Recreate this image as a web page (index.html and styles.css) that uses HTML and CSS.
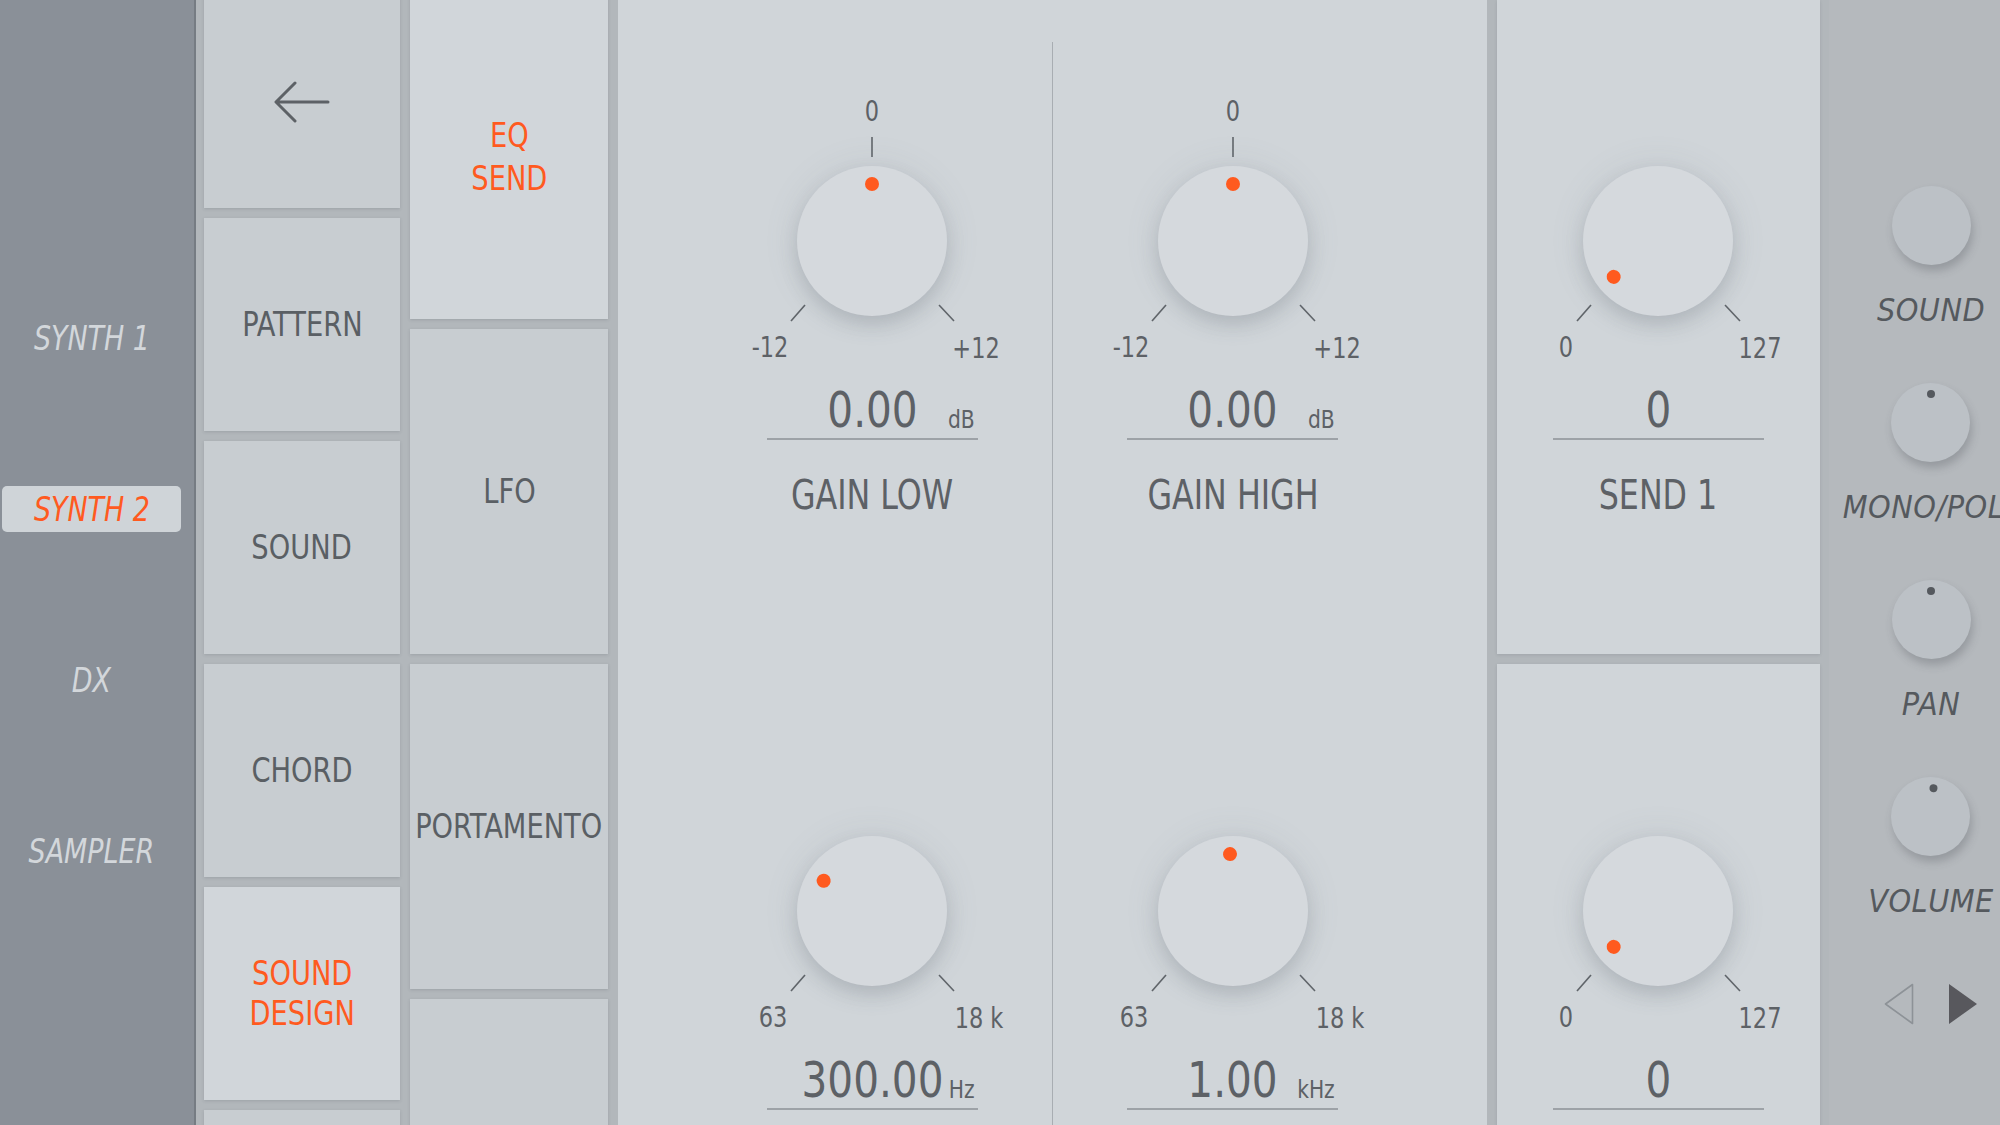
FILE: index.html
```html
<!DOCTYPE html>
<html lang="en">
<head>
<meta charset="utf-8">
<title>Sound Design - EQ / Send</title>
<link rel="stylesheet" href="styles.css">
</head>
<body>
<div class="app">
  <nav class="tracks">
    <div class="track"><span class="lbl">SYNTH 1</span></div>
    <div class="track active"><span class="lbl">SYNTH 2</span></div>
    <div class="track"><span class="lbl">DX</span></div>
    <div class="track"><span class="lbl">SAMPLER</span></div>
  </nav>

  <div class="menu menu-main">
    <div class="btn back">
      <svg width="58" height="42" viewBox="0 0 58 42" aria-label="Back">
        <path d="M55 21 H4 M22 2 L3 21 L22 40" fill="none" stroke="#5d6166" stroke-width="3" stroke-linecap="round" stroke-linejoin="round"/>
      </svg>
    </div>
    <div class="btn"><span class="lbl">PATTERN</span></div>
    <div class="btn"><span class="lbl">SOUND</span></div>
    <div class="btn"><span class="lbl">CHORD</span></div>
    <div class="btn active"><span class="lbl">SOUND<br>DESIGN</span></div>
    <div class="btn"></div>
  </div>

  <div class="menu menu-sub">
    <div class="btn active"><span class="lbl">EQ<br>SEND</span></div>
    <div class="btn"><span class="lbl">LFO</span></div>
    <div class="btn"><span class="lbl">PORTAMENTO</span></div>
    <div class="btn"></div>
  </div>

  <main class="eq">
    <div class="eq-col">
      <div class="unit">
        <div class="dial">
          <svg class="ticks" width="300" height="295" viewBox="0 0 300 295">
            <line x1="150" y1="46" x2="150" y2="66"/>
            <line x1="83" y1="214" x2="69" y2="230"/>
            <line x1="217" y1="214" x2="232" y2="230"/>
          </svg>
          <span class="mark mark-top">0</span>
          <span class="mark mark-min">-12</span>
          <span class="mark mark-max">+12</span>
          <div class="knob"><div class="pointer" style="transform: rotate(0deg)"><i class="dot"></i></div></div>
        </div>
        <div class="readout"><span class="num">0.00</span><span class="u">dB</span></div>
        <div class="param">GAIN LOW</div>
      </div>
      <div class="unit">
        <div class="dial">
          <svg class="ticks" width="300" height="295" viewBox="0 0 300 295">
            <line x1="83" y1="214" x2="69" y2="230"/>
            <line x1="217" y1="214" x2="232" y2="230"/>
          </svg>
          <span class="mark mark-min freq">63</span>
          <span class="mark mark-max freq">18 k</span>
          <div class="knob"><div class="pointer" style="transform: rotate(-58deg)"><i class="dot"></i></div></div>
        </div>
        <div class="readout"><span class="num">300.00</span><span class="u">Hz</span></div>
      </div>
    </div>

    <div class="eq-col">
      <div class="unit">
        <div class="dial">
          <svg class="ticks" width="300" height="295" viewBox="0 0 300 295">
            <line x1="150" y1="46" x2="150" y2="66"/>
            <line x1="83" y1="214" x2="69" y2="230"/>
            <line x1="217" y1="214" x2="232" y2="230"/>
          </svg>
          <span class="mark mark-top">0</span>
          <span class="mark mark-min">-12</span>
          <span class="mark mark-max">+12</span>
          <div class="knob"><div class="pointer" style="transform: rotate(0deg)"><i class="dot"></i></div></div>
        </div>
        <div class="readout"><span class="num">0.00</span><span class="u">dB</span></div>
        <div class="param">GAIN HIGH</div>
      </div>
      <div class="unit">
        <div class="dial">
          <svg class="ticks" width="300" height="295" viewBox="0 0 300 295">
            <line x1="83" y1="214" x2="69" y2="230"/>
            <line x1="217" y1="214" x2="232" y2="230"/>
          </svg>
          <span class="mark mark-min freq">63</span>
          <span class="mark mark-max freq">18 k</span>
          <div class="knob"><div class="pointer" style="transform: rotate(-3deg)"><i class="dot"></i></div></div>
        </div>
        <div class="readout"><span class="num">1.00</span><span class="u">kHz</span></div>
      </div>
    </div>
  </main>

  <div class="sends">
    <section class="send-panel">
      <div class="unit">
        <div class="dial">
          <svg class="ticks" width="300" height="295" viewBox="0 0 300 295">
            <line x1="83" y1="214" x2="69" y2="230"/>
            <line x1="217" y1="214" x2="232" y2="230"/>
          </svg>
          <span class="mark mark-min send">0</span>
          <span class="mark mark-max send">127</span>
          <div class="knob"><div class="pointer" style="transform: rotate(-129deg)"><i class="dot"></i></div></div>
        </div>
        <div class="readout"><span class="num">0</span></div>
        <div class="param">SEND 1</div>
      </div>
    </section>
    <section class="send-panel lower">
      <div class="unit">
        <div class="dial">
          <svg class="ticks" width="300" height="295" viewBox="0 0 300 295">
            <line x1="83" y1="214" x2="69" y2="230"/>
            <line x1="217" y1="214" x2="232" y2="230"/>
          </svg>
          <span class="mark mark-min send">0</span>
          <span class="mark mark-max send">127</span>
          <div class="knob"><div class="pointer" style="transform: rotate(-129deg)"><i class="dot"></i></div></div>
        </div>
        <div class="readout"><span class="num">0</span></div>
      </div>
    </section>
  </div>

  <aside class="mixer">
    <div class="m-item">
      <div class="m-knob"></div>
      <div class="m-label">SOUND</div>
    </div>
    <div class="m-item">
      <div class="m-knob"><div class="pointer" style="transform: rotate(0deg)"><i class="m-dot"></i></div></div>
      <div class="m-label">MONO/POLY</div>
    </div>
    <div class="m-item">
      <div class="m-knob"><div class="pointer" style="transform: rotate(0deg)"><i class="m-dot"></i></div></div>
      <div class="m-label">PAN</div>
    </div>
    <div class="m-item">
      <div class="m-knob"><div class="pointer" style="transform: rotate(5deg)"><i class="m-dot"></i></div></div>
      <div class="m-label">VOLUME</div>
    </div>
    <div class="arrows">
      <svg width="30" height="42" viewBox="0 0 30 42" aria-label="Previous">
        <path d="M28.5 1.5 L1.5 21 L28.5 40.5 Z" fill="none" stroke="#8d9297" stroke-width="1.6" stroke-linejoin="round"/>
      </svg>
      <svg width="30" height="42" viewBox="0 0 30 42" aria-label="Next">
        <path d="M1 1 L29 21 L1 41 Z" fill="#58585d"/>
      </svg>
    </div>
  </aside>
</div>
</body>
</html>
```

FILE: styles.css
```css
* { box-sizing: border-box; }

html, body {
  margin: 0;
  padding: 0;
}

body {
  width: 2000px;
  height: 1125px;
  overflow: hidden;
  background: #b2b7bb;
  font-family: "Liberation Sans Narrow", "DejaVu Sans Condensed", "Roboto Condensed", Roboto, sans-serif;
  color: #5b6065;
}

.app {
  display: flex;
  align-items: flex-start;
  width: 2000px;
  height: 1125px;
  overflow: hidden;
}

.lbl {
  display: inline-block;
  transform: scaleX(0.92);
}

/* ---------- track list ---------- */
.tracks {
  flex: 0 0 196px;
  height: 1125px;
  background: #8a9098;
  border-right: 2px solid #767c83;
  padding-top: 315px;
  display: flex;
  flex-direction: column;
  gap: 125px;
}

.track {
  margin-left: 2px;
  width: 179px;
  height: 46px;
  line-height: 46px;
  border-radius: 5px;
  text-align: center;
  font-style: italic;
  font-size: 34px;
  color: #d3d7db;
  white-space: nowrap;
}

.track .lbl {
  transform: scaleX(0.88);
}

.track.active {
  background: #cfd4d8;
  color: #ff5a1f;
}

/* ---------- menus ---------- */
.menu {
  flex-shrink: 0;
  display: flex;
  flex-direction: column;
  gap: 10px;
}

.menu-main {
  width: 196px;
  margin-left: 8px;
  margin-top: -5px;
}

.menu-sub {
  width: 198px;
  margin-left: 10px;
  margin-top: -6px;
}

.btn {
  flex-shrink: 0;
  display: flex;
  align-items: center;
  justify-content: center;
  text-align: center;
  background: #c8cdd1;
  font-size: 33px;
  color: #5a5f64;
  white-space: nowrap;
  box-shadow: 0 1px 3px rgba(60, 70, 80, 0.18);
}

.menu-main .btn {
  height: 213px;
  line-height: 40px;
}

.menu-sub .btn {
  height: 325px;
  line-height: 43px;
}

.btn.active {
  background: #d1d6da;
  color: #ff5a1f;
}

/* ---------- EQ panel ---------- */
.eq {
  flex: 0 0 869px;
  margin-left: 10px;
  height: 1125px;
  background: #d0d5d9;
  padding: 42px 0 0 74px;
  display: flex;
  overflow: hidden;
}

.eq-col {
  flex: 0 0 360px;
  padding-top: 49px;
  display: flex;
  flex-direction: column;
  align-items: center;
  gap: 245px;
}

.eq-col + .eq-col {
  border-left: 1px solid #a8adb2;
}

.unit {
  width: 300px;
  flex-shrink: 0;
}

.dial {
  position: relative;
  width: 300px;
  height: 295px;
}

.ticks {
  position: absolute;
  left: 0;
  top: 0;
}

.ticks line {
  stroke: #60656a;
  stroke-width: 1.6;
}

.mark {
  position: absolute;
  top: 256px;
  transform: translate(-50%, -50%) scaleX(0.86);
  font-size: 29px;
  line-height: 1;
  white-space: nowrap;
  color: #5d6166;
}

.mark-top { top: 19.5px; left: 150px; }
.mark-min { left: 48px; }
.mark-max { left: 254px; top: 257px; }
.mark-min.freq { left: 51px; }
.mark-max.freq { left: 257px; }
.mark-min.send { left: 58px; }
.mark-max.send { left: 252px; }

.knob {
  position: absolute;
  left: 75px;
  top: 75px;
  width: 150px;
  height: 150px;
  border-radius: 50%;
  background: #d5d9dd;
  box-shadow: 0 9px 18px rgba(90, 100, 110, 0.22), 0 0 34px rgba(120, 130, 140, 0.14);
}

.pointer {
  position: absolute;
  left: 0;
  top: 0;
  width: 100%;
  height: 100%;
}

.dot {
  position: absolute;
  left: 68px;
  top: 11px;
  width: 14px;
  height: 14px;
  border-radius: 50%;
  background: #ff5a1f;
}

.readout {
  position: relative;
  width: 211px;
  height: 54px;
  margin: 0 auto;
  padding-bottom: 3px;
  border-bottom: 2px solid #9da2a7;
  text-align: center;
}

.num {
  display: block;
  font-size: 49px;
  line-height: 49px;
  transform: scaleX(0.92);
  color: #5d6166;
}

.u {
  position: absolute;
  right: 3px;
  top: 21px;
  font-size: 25px;
  line-height: 25px;
  transform: scaleX(0.9);
  transform-origin: right center;
  color: #5d6166;
}

.param {
  margin-top: 35px;
  font-size: 41px;
  line-height: 41px;
  text-align: center;
  white-space: nowrap;
  transform: scaleX(0.86);
  color: #5d6166;
}

/* ---------- sends ---------- */
.sends {
  flex: 0 0 323px;
  margin-left: 10px;
  display: flex;
  flex-direction: column;
  gap: 10px;
}

.send-panel {
  height: 654px;
  padding: 91px 0 0 11px;
  background: #d0d5d9;
  box-shadow: 0 1px 3px rgba(60, 70, 80, 0.15);
}

.send-panel.lower {
  height: 470px;
  padding-top: 97px;
}

/* ---------- mixer strip ---------- */
.mixer {
  flex: 0 0 204px;
  margin-left: 9px;
  height: 1125px;
  background: #b5b9bd;
  padding-top: 186px;
  display: flex;
  flex-direction: column;
  align-items: center;
  gap: 53px;
}

.m-item {
  display: flex;
  flex-direction: column;
  align-items: center;
}

.m-knob {
  position: relative;
  width: 79px;
  height: 79px;
  border-radius: 50%;
  background: #bcc1c6;
  box-shadow: 2px 6px 9px rgba(60, 66, 72, 0.26);
}

.m-dot {
  position: absolute;
  left: 35.5px;
  top: 6.5px;
  width: 8px;
  height: 8px;
  border-radius: 50%;
  background: #55595e;
}

.m-label {
  margin-top: 25px;
  font-size: 32px;
  line-height: 40px;
  font-style: italic;
  letter-spacing: 0.5px;
  white-space: nowrap;
  color: #55595e;
}

.arrows {
  display: flex;
  align-items: center;
  gap: 34px;
  height: 42px;
  margin-top: 9px;
}
```
